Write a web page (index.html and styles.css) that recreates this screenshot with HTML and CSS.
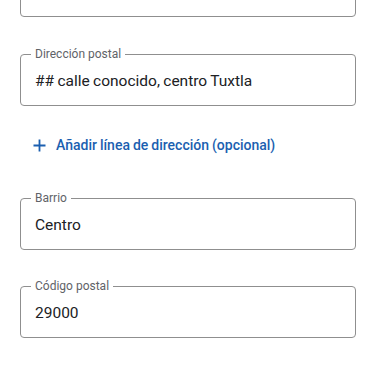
FILE: index.html
```html
<!DOCTYPE html>
<html lang="es">
<head>
<meta charset="utf-8">
<link rel="stylesheet" href="styles.css">
</head>
<body>
<div class="form">
  <div class="field field-first">
    <div class="value"></div>
  </div>
  <div class="field">
    <span class="label">Dirección postal</span>
    <div class="value">## calle conocido, centro Tuxtla</div>
  </div>
  <div class="add-row">
    <svg class="plus" width="13" height="13" viewBox="0 0 13 13"><path d="M6.5 0.5v12M0.5 6.5h12" stroke="#1b5fb0" stroke-width="1.8" fill="none"/></svg>
    <span class="add-text">Añadir línea de dirección (opcional)</span>
  </div>
  <div class="field">
    <span class="label">Barrio</span>
    <div class="value">Centro</div>
  </div>
  <div class="field field-gap">
    <span class="label">Código postal</span>
    <div class="value">29000</div>
  </div>
</div>
</body>
</html>
```

FILE: styles.css
```css
html, body {
  margin: 0;
  padding: 0;
  background: #ffffff;
}
body {
  width: 375px;
  height: 366px;
  overflow: hidden;
  font-family: Roboto, "Open Sans", "Liberation Sans", sans-serif;
}
.form {
  padding: 0 19px 0 20px;
  display: flex;
  flex-direction: column;
}
.field {
  position: relative;
  height: 52px;
  border: 1px solid #8f8f8f;
  border-radius: 4px;
  box-sizing: border-box;
  display: flex;
  align-items: center;
  padding: 0 14px;
}
.field-first {
  margin-top: -35px;
  margin-bottom: 37px;
}
.field-gap {
  margin-top: 36px;
}
.label {
  position: absolute;
  top: -9px;
  left: 10px;
  padding: 0 4px;
  background: #ffffff;
  font-size: 12px;
  line-height: 16px;
  color: #5f6368;
}
.value {
  font-size: 15.5px;
  color: #202124;
  line-height: 20px;
  word-spacing: -0.5px;
  padding-top: 1px;
}
.add-row {
  height: 48px;
  margin: 15px 0 29px;
  display: flex;
  align-items: center;
  padding-left: 13px;
}
.plus {
  margin-right: 10px;
  flex: none;
}
.add-text {
  font-size: 14px;
  font-weight: 500;
  word-spacing: -0.5px;
  color: #1b5fb0;
}
```
